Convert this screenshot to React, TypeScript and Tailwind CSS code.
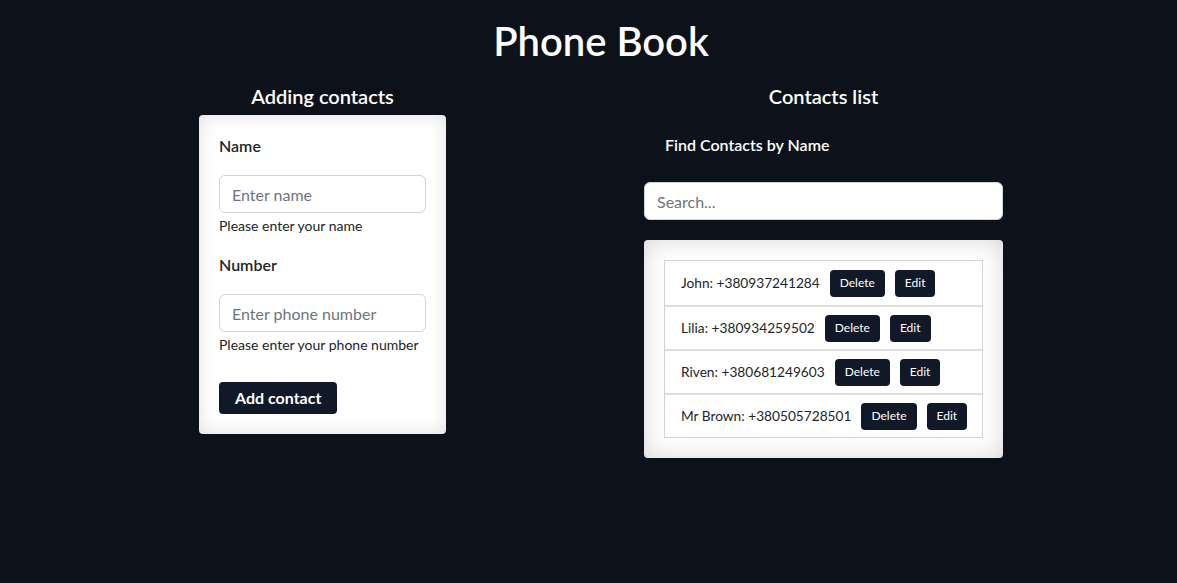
import React from "react";

interface Contact {
  id: number;
  name: string;
  number: string;
}

const contacts: Contact[] = [
  { id: 1, name: "John", number: "+380937241284" },
  { id: 2, name: "Lilia", number: "+380934259502" },
  { id: 3, name: "Riven", number: "+380681249603" },
  { id: 4, name: "Mr Brown", number: "+380505728501" },
];

const font = { fontFamily: "Lato, 'Noto Sans', sans-serif" };

const ContactForm: React.FC = () => (
  <div className="w-[247px] rounded bg-white px-5 pt-[19px] pb-5 text-[#212529] shadow-[inset_0_0_18px_rgba(0,0,0,0.13)]">
    <label className="block text-base font-semibold leading-6">Name</label>
    <input
      className="mt-[17px] block h-[38px] w-full rounded-md border border-[#ced4da] px-3 text-base outline-none placeholder:text-[#6c757d]"
      placeholder="Enter name"
    />
    <div className="mt-[3px] text-sm leading-5">Please enter your name</div>
    <label className="mt-[17px] block text-base font-semibold leading-6">Number</label>
    <input
      className="mt-[17px] block h-[38px] w-full rounded-md border border-[#ced4da] px-3 text-base outline-none placeholder:text-[#6c757d]"
      placeholder="Enter phone number"
    />
    <div className="mt-[3px] text-sm leading-5">Please enter your phone number</div>
    <button className="mt-[27px] h-8 rounded bg-[#111827] px-4 text-base font-bold text-white">
      Add contact
    </button>
  </div>
);

const ContactList: React.FC = () => (
  <div className="rounded bg-white p-5 shadow-[inset_0_0_24px_rgba(0,0,0,0.16)]">
    <ul className="border border-[#d4d4d4]">
      {contacts.map((c, idx) => (
        <li
          key={c.id}
          className={`flex h-[44px] items-center whitespace-nowrap px-4 text-[13.7px] text-[#212529] ${
            idx > 0 ? "border-t-2 border-[#dedede]" : ""
          }`}
        >
          <span className="shrink-0">
            {c.name}: {c.number}
          </span>
          <button className="ml-[10px] h-[27px] shrink-0 rounded bg-[#111827] px-[10px] text-xs text-white">
            Delete
          </button>
          <button className="ml-[10px] h-[27px] shrink-0 rounded bg-[#111827] px-[10px] text-xs text-white">
            Edit
          </button>
        </li>
      ))}
    </ul>
  </div>
);

export default function App() {
  return (
    <div className="min-h-[583px] bg-[#0d121a] pl-[25px] text-white" style={font}>
      <h1 className="pt-[17px] text-center text-[40px] font-semibold leading-[48px]">Phone Book</h1>
      <div className="mt-[19px] flex justify-center gap-[198px]">
        <div className="flex flex-col items-center">
          <h2 className="text-xl font-semibold leading-6">Adding contacts</h2>
          <div className="mt-[7px]">
            <ContactForm />
          </div>
        </div>
        <div className="flex w-[359px] flex-col">
          <h2 className="text-center text-xl font-semibold leading-6">Contacts list</h2>
          <h3 className="mt-[25px] pl-[21px] text-base font-semibold leading-6">Find Contacts by Name</h3>
          <input
            className="mt-[25px] h-[38px] w-full rounded-md border border-[#ced4da] bg-white px-3 text-base text-[#212529] outline-none placeholder:text-[#6c757d]"
            placeholder="Search..."
          />
          <div className="mt-5">
            <ContactList />
          </div>
        </div>
      </div>
    </div>
  );
}
